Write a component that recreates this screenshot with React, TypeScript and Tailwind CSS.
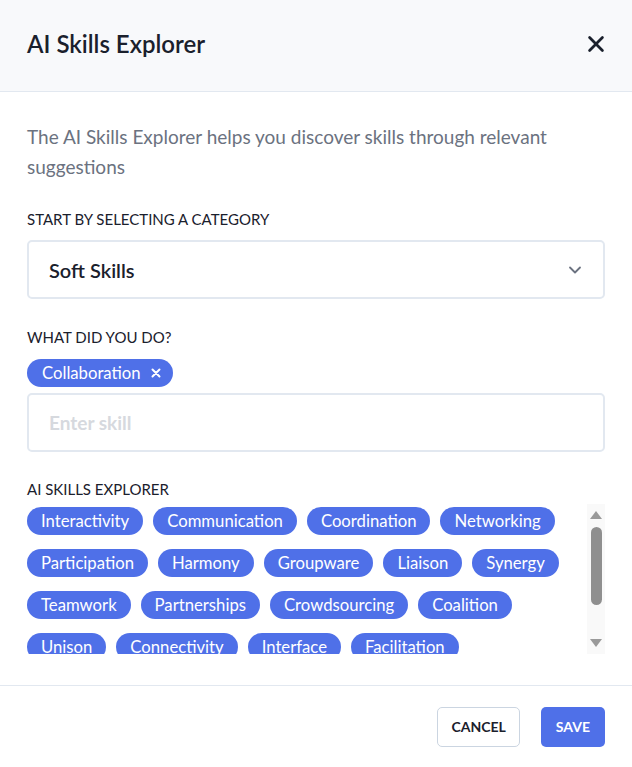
import React, { useState } from 'react';

const suggestions = [
  'Interactivity',
  'Communication',
  'Coordination',
  'Networking',
  'Participation',
  'Harmony',
  'Groupware',
  'Liaison',
  'Synergy',
  'Teamwork',
  'Partnerships',
  'Crowdsourcing',
  'Coalition',
  'Unison',
  'Connectivity',
  'Interface',
  'Facilitation',
];

const font = { fontFamily: 'Lato, "Noto Sans", sans-serif' };

const CloseIcon = ({ className, width = 3.2 }: { className?: string; width?: number }) => (
  <svg viewBox="0 0 24 24" className={className} fill="none" stroke="currentColor" strokeWidth={width} strokeLinecap="round">
    <path d="M5 5l14 14M19 5L5 19" />
  </svg>
);

export default function App() {
  const [selected, setSelected] = useState<string[]>(['Collaboration']);

  return (
    <div className="w-[632px] h-[767px] bg-white flex flex-col text-[#1a202c]" style={font}>
      {/* header */}
      <div className="h-[92px] shrink-0 bg-[#f8f9fb] border-b border-[#e2e8f0] flex items-center justify-between pl-[27px] pr-[25px] pb-[3px]">
        <h1 className="text-[24px] font-semibold text-[#1a202c]">AI Skills Explorer</h1>
        <button className="text-[#1a202c]">
          <CloseIcon className="w-[22px] h-[22px]" width={3} />
        </button>
      </div>

      {/* body */}
      <div className="flex-1 px-[27px] pt-[30px]">
        <p className="text-[19px] leading-[30px] text-[#6b7280]">
          The AI Skills Explorer helps you discover skills through relevant suggestions
        </p>

        <div className="mt-[27px] text-[15px] leading-[20px] text-[#1a202c]">START BY SELECTING A CATEGORY</div>
        <div className="mt-[11px] h-[59px] border-2 border-[#e2e8f0] rounded-[5px] flex items-center justify-between pl-[20px] pr-[18px]">
          <span className="text-[20px] font-semibold">Soft Skills</span>
          <svg viewBox="0 0 24 24" className="w-[20px] h-[20px] text-[#6b7280]" fill="none" stroke="currentColor" strokeWidth={2.2} strokeLinecap="round" strokeLinejoin="round">
            <path d="M6 9l6 6 6-6" />
          </svg>
        </div>

        <div className="mt-[28px] text-[15px] leading-[20px]">WHAT DID YOU DO?</div>
        <div className="mt-[12px] flex flex-wrap gap-[10px]">
          {selected.map((s) => (
            <span key={s} className="h-[28px] rounded-full bg-[#4f70e8] text-white text-[16.7px] flex items-center pt-[2px] pl-[15px] pr-[11px] gap-[9px]">
              {s}
              <button onClick={() => setSelected(selected.filter((x) => x !== s))} className="-mt-[2px]">
                <CloseIcon className="w-[12px] h-[12px]" width={4} />
              </button>
            </span>
          ))}
        </div>
        <input
          placeholder="Enter skill"
          className="mt-[6px] w-full h-[59px] border-2 border-[#e2e8f0] rounded-[5px] px-[20px] text-[19px] font-bold outline-none placeholder:text-[#d6d9de]"
        />

        <div className="mt-[27px] text-[15px] leading-[20px]">AI SKILLS EXPLORER</div>
        <div className="mt-[5px] h-[150px] flex overflow-hidden">
          <div className="flex-1 pt-[3px] pr-[4px]">
            <div className="flex flex-wrap gap-x-[10px] gap-y-[14px]">
              {suggestions.map((s) => (
                <button
                  key={s}
                  onClick={() => !selected.includes(s) && setSelected([...selected, s])}
                  className="h-[28px] rounded-full bg-[#4f70e8] text-white text-[16.7px] px-[14px] pt-[2px] flex items-center"
                >
                  {s}
                </button>
              ))}
            </div>
          </div>
          {/* scrollbar */}
          <div className="w-[18px] shrink-0 bg-[#f9f9f9] flex flex-col items-center pt-[7px] pb-[7px]">
            <svg viewBox="0 0 12 8" className="w-[12px] h-[8px] text-[#9a9a9a]" fill="currentColor">
              <path d="M6 0l6 8H0z" />
            </svg>
            <div className="mt-[8px] w-[11px] h-[78px] rounded-full bg-[#8f8f8f]" />
            <div className="flex-1" />
            <svg viewBox="0 0 12 8" className="w-[12px] h-[8px] text-[#9a9a9a]" fill="currentColor">
              <path d="M0 0h12L6 8z" />
            </svg>
          </div>
        </div>
      </div>

      {/* footer */}
      <div className="h-[82px] shrink-0 border-t border-[#e2e8f0] flex items-center justify-end gap-[21px] px-[27px]">
        <button className="h-[40px] px-[13px] border border-[#cbd5e1] rounded-[5px] text-[14px] font-bold text-[#1a202c]">
          CANCEL
        </button>
        <button className="h-[40px] px-[15px] bg-[#4f70e8] rounded-[5px] text-[14px] font-bold text-white">
          SAVE
        </button>
      </div>
    </div>
  );
}
